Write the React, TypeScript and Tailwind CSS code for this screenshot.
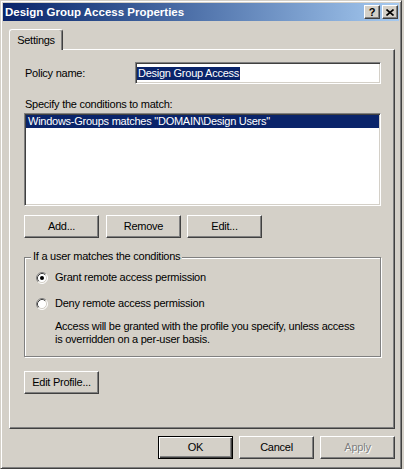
import React from "react";

function Radio({ checked }: { checked: boolean }) {
  return (
    <svg width="12" height="12" viewBox="0 0 12 12" className="shrink-0">
      <circle cx="6" cy="6" r="5" fill="#fff" />
      <path d="M2.11 9.89A5.5 5.5 0 0 1 9.89 2.11" fill="none" stroke="#808080" strokeWidth="1" />
      <path d="M9.89 2.11A5.5 5.5 0 0 1 2.11 9.89" fill="none" stroke="#fff" strokeWidth="1" />
      <path d="M2.82 9.18A4.5 4.5 0 0 1 9.18 2.82" fill="none" stroke="#404040" strokeWidth="1" />
      <path d="M9.18 2.82A4.5 4.5 0 0 1 2.82 9.18" fill="none" stroke="#d4d0c8" strokeWidth="1" />
      {checked && <circle cx="6" cy="6" r="2" fill="#000" />}
    </svg>
  );
}

const btnBase =
  "flex items-center justify-center w-[75px] h-[23px] bg-[#d4d0c8] border border-t-white border-l-white border-r-[#404040] border-b-[#404040] shadow-[inset_-1px_-1px_0_#808080] text-[11px] tracking-[-0.25px] leading-[13px]";
const btn = btnBase + " text-black";

export default function App() {
  return (
    <div className="w-[404px] h-[469px] bg-[#d4d0c8] font-['Liberation_Sans',Arial,sans-serif] text-[11px] leading-[13px] tracking-[-0.25px] text-black overflow-hidden">
      <div className="w-[402px] h-[469px] flex flex-col bg-[#d4d0c8] border border-t-[#d4d0c8] border-l-[#d4d0c8] border-r-[#404040] border-b-[#404040] shadow-[inset_1px_1px_0_#fff,inset_-1px_-1px_0_#808080] p-[2px]">
        {/* Title bar */}
        <div className="h-[18px] shrink-0 flex items-center bg-gradient-to-r from-[#0a246a] to-[#a6caf0] pl-[2px] pr-[1px]">
          <span className="text-white font-bold text-[11.5px] tracking-normal leading-[14px]">
            Design Group Access Properties
          </span>
          <div className="ml-auto flex gap-[2px]">
            <div className="w-[16px] h-[14px] flex items-center justify-center bg-[#d4d0c8] border border-t-white border-l-white border-r-[#404040] border-b-[#404040] shadow-[inset_-1px_-1px_0_#808080] text-[11px] font-bold leading-[12px] tracking-normal text-black">
              ?
            </div>
            <div className="w-[16px] h-[14px] flex items-center justify-center bg-[#d4d0c8] border border-t-white border-l-white border-r-[#404040] border-b-[#404040] shadow-[inset_-1px_-1px_0_#808080]">
              <svg width="8" height="7" viewBox="0 0 8 7">
                <path d="M0.5 0.5L7.5 6.5M7.5 0.5L0.5 6.5" stroke="#000" strokeWidth="1.6" fill="none" />
              </svg>
            </div>
          </div>
        </div>

        {/* Tab strip */}
        <div className="flex pl-[6px] pt-[8px]">
          <div className="relative z-10 -mb-px h-[21px] w-[54px] bg-[#d4d0c8] border-l border-t border-r border-l-white border-t-white border-r-[#404040] shadow-[inset_-1px_0_0_#808080] rounded-tl-[3px] rounded-tr-[3px] flex items-center justify-center">
            Settings
          </div>
        </div>

        {/* Panel */}
        <div className="ml-[6px] w-[386px] h-[380px] shrink-0 flex flex-col bg-[#d4d0c8] border border-t-white border-l-white border-r-[#404040] border-b-[#404040] shadow-[inset_-1px_-1px_0_#808080] pl-[14px] pt-[12px]">
          <div className="flex items-center">
            <div className="w-[111px] pl-[1px]">Policy name:</div>
            <div className="w-[246px] h-[22px] flex items-center bg-white border border-t-[#808080] border-l-[#808080] border-r-white border-b-white shadow-[inset_1px_1px_0_#404040,inset_-1px_-1px_0_#d4d0c8] pl-[1px]">
              <span className="bg-[#0a246a] text-white px-[1px]">Design Group Access</span>
            </div>
          </div>

          <div className="mt-[14px] pl-[1px]">Specify the conditions to match:</div>
          <div className="mt-[2px] w-[357px] h-[93px] bg-white border border-t-[#808080] border-l-[#808080] border-r-white border-b-white shadow-[inset_1px_1px_0_#404040,inset_-1px_-1px_0_#d4d0c8] p-[1px]">
            <div className="h-[13px] bg-[#0a246a] text-white pl-[2px] whitespace-nowrap">
              {'Windows-Groups matches "DOMAIN\\Design Users"'}
            </div>
          </div>

          <div className="mt-[9px] flex">
            <div className={btn}>Add...</div>
            <div className={btn + " ml-[7px]"}>Remove</div>
            <div className={btn + " ml-[6px]"}>Edit...</div>
          </div>

          <div className="relative mt-[19px] w-[357px] h-[100px] border border-[#808080] shadow-[1px_1px_0_#fff,inset_1px_1px_0_#fff] flex flex-col">
            <div className="absolute -top-[8px] left-[6px] px-[2px] bg-[#d4d0c8] whitespace-nowrap">
              If a user matches the conditions
            </div>
            <div className="mt-[13px] pl-[11px] flex items-center gap-[7px] h-[13px]">
              <Radio checked />
              <span>Grant remote access permission</span>
            </div>
            <div className="mt-[13px] pl-[11px] flex items-center gap-[7px] h-[13px]">
              <Radio checked={false} />
              <span>Deny remote access permission</span>
            </div>
            <div className="mt-[10px] pl-[30px] pr-[4px]">
              <div className="whitespace-nowrap">Access will be granted with the profile you specify, unless access</div>
              <div className="whitespace-nowrap">is overridden on a per-user basis.</div>
            </div>
          </div>

          <div className="mt-[14px] flex">
            <div className={btn}>Edit Profile...</div>
          </div>
        </div>

        {/* Bottom buttons */}
        <div className="ml-[6px] w-[386px] mt-[7px] flex justify-end gap-[6px]">
          <div className="flex items-center justify-center w-[75px] h-[23px] bg-[#d4d0c8] border border-black shadow-[inset_1px_1px_0_#fff,inset_-1px_-1px_0_#404040,inset_-2px_-2px_0_#808080]">
            OK
          </div>
          <div className={btn}>Cancel</div>
          <div className={btnBase + " text-[#808080] [text-shadow:1px_1px_0_#fff]"}>Apply</div>
        </div>
      </div>
    </div>
  );
}
